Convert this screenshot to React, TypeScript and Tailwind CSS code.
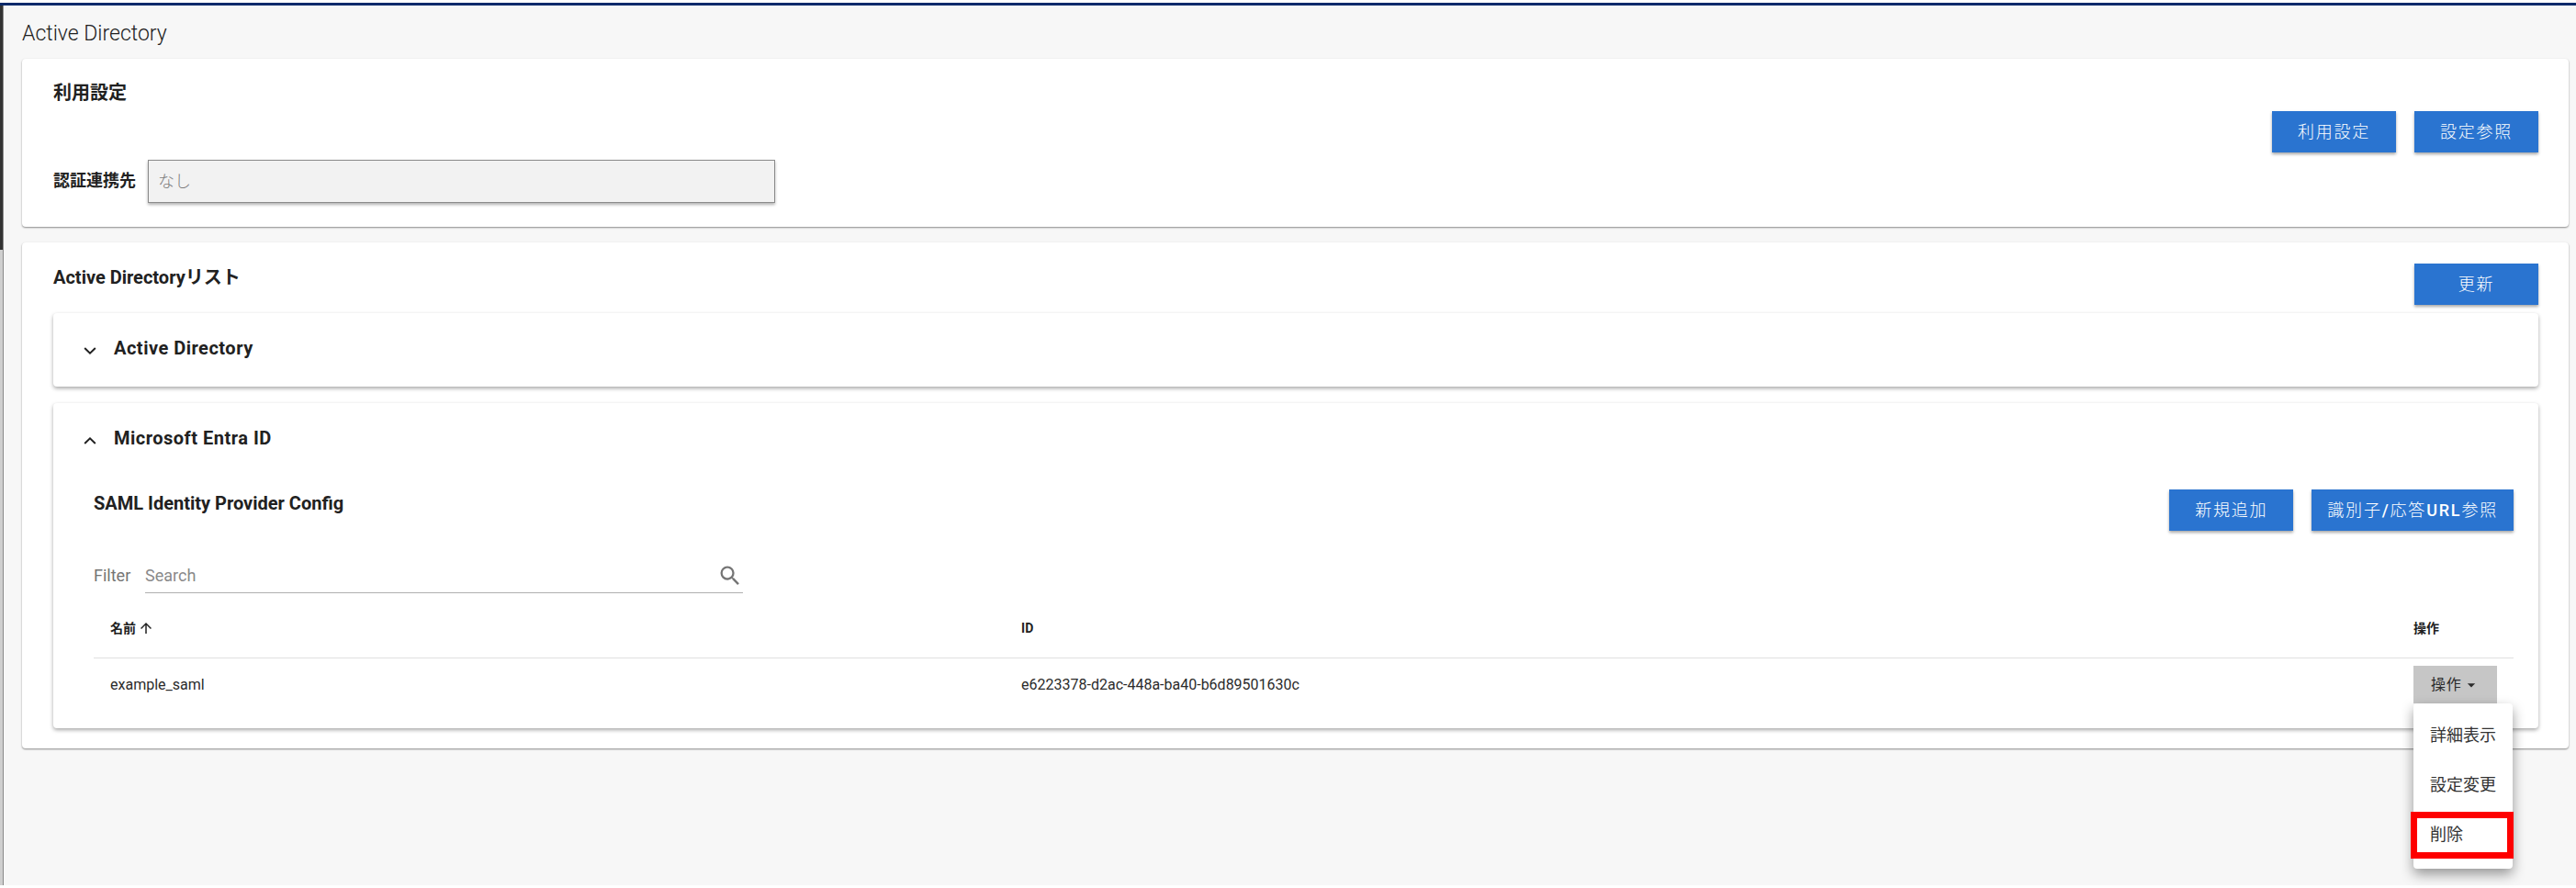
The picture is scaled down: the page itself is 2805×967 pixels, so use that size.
import { useState, type ReactNode } from 'react'
import { MdSearch, MdArrowDropDown, MdArrowUpward } from 'react-icons/md'

interface Provider {
  id: string
  name: string
}

const providers: Provider[] = [
  { id: 'e6223378-d2ac-448a-ba40-b6d89501630c', name: 'example_saml' },
]

const rowActions = [
  { key: 'detail', label: '詳細表示' },
  { key: 'edit', label: '設定変更' },
  { key: 'delete', label: '削除' },
]

function Chevron({ open }: { open: boolean }) {
  return (
    <svg className="mt-1.5 h-2 w-3.5" viewBox="0 0 14 8" fill="none" stroke="currentColor" strokeWidth="2">
      <path d={open ? 'M1.2 7 7 1.4 12.8 7' : 'M1.2 1 7 6.6 12.8 1'} />
    </svg>
  )
}

function PrimaryButton({ children }: { children: ReactNode }) {
  return (
    <button
      type="button"
      className="h-[45px] min-w-[135px] cursor-pointer bg-[#2a74d0] px-[17px] text-lg font-light tracking-widest text-white shadow-[0_2px_3px_rgba(0,0,0,0.35)]"
    >
      {children}
    </button>
  )
}

function Card({ children, className }: { children: ReactNode; className: string }) {
  return (
    <section className={`rounded bg-white pr-[33px] pl-[34px] shadow-[0_1px_2px_rgba(0,0,0,0.45)] ${className}`}>
      {children}
    </section>
  )
}

function Panel({ title, defaultOpen = false, children }: { title: string; defaultOpen?: boolean; children?: ReactNode }) {
  const [open, setOpen] = useState(defaultOpen)
  return (
    <div className="rounded bg-white shadow-[0_2px_4px_rgba(0,0,0,0.35)]">
      <h3>
        <button
          type="button"
          aria-expanded={open}
          onClick={() => setOpen(!open)}
          className="flex h-20 w-full cursor-pointer items-center gap-[19px] pb-1 pl-[33px] text-xl font-bold tracking-wide"
        >
          <Chevron open={open} />
          {title}
        </button>
      </h3>
      {open && children}
    </div>
  )
}

function ActionMenu() {
  const [open, setOpen] = useState(true)
  return (
    <div className="relative w-[91px]">
      <button
        type="button"
        aria-expanded={open}
        onClick={() => setOpen(!open)}
        className="flex h-[41px] w-full cursor-pointer items-center bg-[#c6c6c6] pl-[19px] text-base tracking-wider"
      >
        操作
        <MdArrowDropDown className="size-5" />
      </button>
      {open && (
        <ul className="absolute top-full left-0 w-[108px] rounded bg-white py-[9px] shadow-[0_6px_14px_rgba(0,0,0,0.4)]">
          {rowActions.map((action) => (
            <li key={action.key} className="relative">
              <button type="button" className="h-[54px] w-full cursor-pointer pb-0.5 pl-[18px] text-left text-lg text-[#333]">
                {action.label}
              </button>
              {action.key === 'delete' && (
                <span className="pointer-events-none absolute top-px -right-px bottom-0.5 -left-[3px] border-[7px] border-[#fe0000]" />
              )}
            </li>
          ))}
        </ul>
      )}
    </div>
  )
}

function ProviderTable() {
  return (
    <table className="mt-[7px] w-full table-fixed text-left">
      <thead>
        <tr className="h-[63px] border-b border-[#e0e0e0] text-sm">
          <th className="w-[37.65%] px-[18px] font-bold">
            <span className="flex items-center gap-0.5">
              名前
              <MdArrowUpward className="size-[18px]" />
            </span>
          </th>
          <th className="px-[18px] font-bold">ID</th>
          <th className="w-[127px] pl-[18px] font-bold">操作</th>
        </tr>
      </thead>
      <tbody>
        {providers.map((provider) => (
          <tr key={provider.id} className="h-[59px] text-base text-[#2b2b2b]">
            <td className="px-[18px]">{provider.name}</td>
            <td className="px-[18px]">{provider.id}</td>
            <td className="pl-[18px]">
              <ActionMenu />
            </td>
          </tr>
        ))}
      </tbody>
    </table>
  )
}

export default function App() {
  return (
    <div className="flex min-h-screen flex-col bg-white pt-[3px] pb-[3px] font-['Roboto','Noto_Sans_CJK_JP',sans-serif] text-[#212121]">
      <div className="h-[3px] bg-[#0b2a6b]" />
      <div className="flex grow bg-[#f7f7f7]">
        {/* Edge of the collapsed side menu */}
        <div className="flex w-1 shrink-0 flex-col border-r border-[#8a8a8a] bg-[#cfcfcf]">
          <div className="h-[266px] bg-[#333]" />
        </div>

        <main className="min-w-0 grow pr-2 pl-5">
          <h1 className="pt-4 pb-3 text-[23px] leading-[30px] font-light">Active Directory</h1>

          <Card className="pt-[23px] pb-[26px]">
            <h2 className="text-xl font-bold">利用設定</h2>
            <div className="mt-1.5 flex justify-end gap-5">
              <PrimaryButton>利用設定</PrimaryButton>
              <PrimaryButton>設定参照</PrimaryButton>
            </div>
            <div className="mt-2 flex items-center">
              <label htmlFor="auth-provider" className="w-[103px] pb-0.5 text-lg font-bold">
                認証連携先
              </label>
              <input
                id="auth-provider"
                disabled
                value="なし"
                className="h-[47px] w-[683px] border border-[#8b8b8b] bg-[#f2f2f2] px-2.5 pb-1 text-lg font-light text-[#7d7d7d] shadow-[0_2px_3px_rgba(0,0,0,0.3)]"
              />
            </div>
          </Card>

          <Card className="mt-[17px] pt-[23px] pb-[22px]">
            <div className="flex items-start justify-between">
              <h2 className="pt-px text-xl font-bold">Active Directoryリスト</h2>
              <PrimaryButton>更新</PrimaryButton>
            </div>

            <div className="mt-[9px] flex flex-col gap-[18px]">
              <Panel title="Active Directory" />
              <Panel title="Microsoft Entra ID" defaultOpen>
                <div className="pt-3.5 pr-[27px] pb-[18px] pl-11">
                  <div className="flex items-start">
                    <h4 className="grow pt-px text-xl font-bold">SAML Identity Provider Config</h4>
                    <div className="flex gap-5">
                      <PrimaryButton>新規追加</PrimaryButton>
                      <PrimaryButton>
                        識別子<span className="font-medium">/</span>応答<span className="font-medium">URL</span>参照
                      </PrimaryButton>
                    </div>
                  </div>

                  <div className="mt-[30px] flex h-[38px] text-lg text-[#757575]">
                    <label htmlFor="filter" className="flex w-14 items-center">
                      Filter
                    </label>
                    <div className="flex w-[651px] items-center border-b border-[#b0b0b0]">
                      <input
                        id="filter"
                        type="text"
                        placeholder="Search"
                        className="min-w-0 grow outline-none placeholder:text-[#8a8a8a]"
                      />
                      <MdSearch className="size-7" />
                    </div>
                  </div>

                  <ProviderTable />
                </div>
              </Panel>
            </div>
          </Card>
        </main>
      </div>
    </div>
  )
}
